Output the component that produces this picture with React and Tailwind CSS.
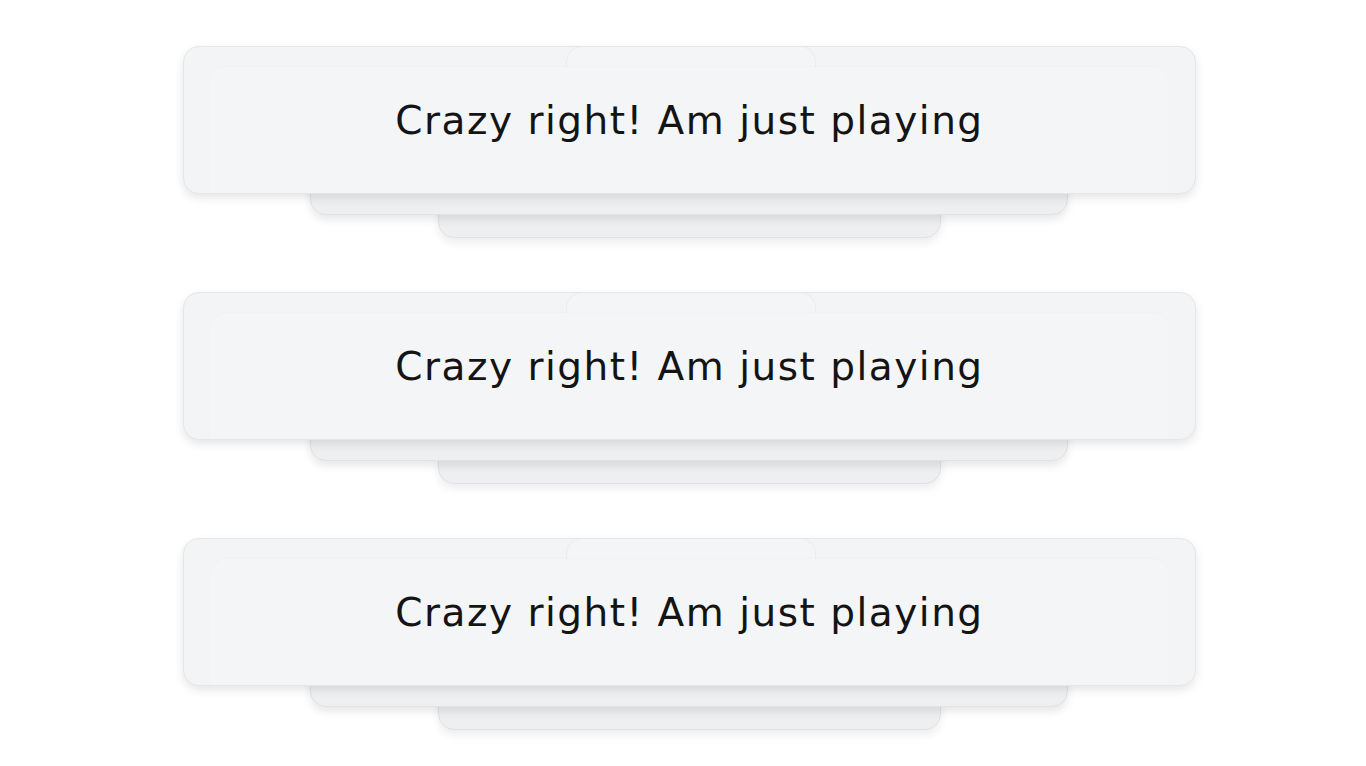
const items = [1, 2, 3];

const StackCard = ({ text }) => {
  return (
    <div className="relative w-[1013px]">
      {/* cards peeking out below, back one first */}
      <div className="absolute left-[255px] right-[255px] top-[44px] h-[148px] rounded-2xl border border-[#e2e2e5] bg-[#eeeff1] shadow-[0_5px_9px_rgba(0,0,0,0.07)]" />
      <div className="absolute left-[127px] right-[128px] top-[21px] h-[148px] rounded-2xl border border-[#e2e2e5] bg-[#eeeff1] shadow-[0_5px_9px_rgba(0,0,0,0.09)]" />

      <div className="relative flex h-[148px] items-center justify-center overflow-hidden rounded-2xl border border-[#e6e6e8] bg-[#f3f4f6] shadow-[0_4px_10px_rgba(0,0,0,0.10)]">
        {/* faint inner layers */}
        <div className="absolute left-[382px] top-[-1px] h-[40px] w-[250px] rounded-t-2xl border-x border-t border-[#ececee] bg-[#f4f5f7]" />
        <div className="absolute inset-x-[26px] top-[20px] bottom-0 rounded-t-2xl bg-[#f4f5f7] shadow-[0_-1px_2px_rgba(0,0,0,0.015)]" />
        <span className="relative font-['DejaVu_Sans',sans-serif] text-[39px] leading-none tracking-[1.5px] text-[#141414]">
          {text}
        </span>
      </div>
    </div>
  );
};

const App = () => {
  return (
    <div className="flex min-h-[766px] flex-col items-center gap-[98px] bg-white pl-[13px] pt-[46px]">
      {items.map((i) => (
        <StackCard key={i} text="Crazy right! Am just playing" />
      ))}
    </div>
  );
};

export default App;
